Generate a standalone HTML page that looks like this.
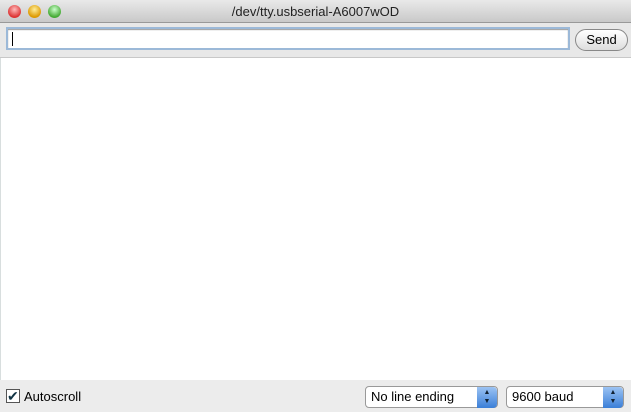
<!DOCTYPE html><html><head><style>
body{margin:0;width:631px;height:412px;overflow:hidden;font-family:"Liberation Sans",sans-serif;background:#ececec;position:relative}
.t{position:absolute;left:0;top:0;width:631px;height:22px;background:linear-gradient(#e9e9e9,#c9c9c9);border-bottom:1px solid #999;text-align:center;font-size:13px;line-height:23px;color:#222}
.d{position:absolute;top:5px;width:13px;height:13px;border-radius:50%}
.tb{position:absolute;top:23px;left:0;width:631px;height:34px;background:#e8e8e8;border-bottom:1px solid #c8c8c8}
.in{position:absolute;left:6px;top:27px;width:560px;height:19px;background:#fff;border:2px solid #9cb9d8;box-shadow:inset 0 1px 1px #999}
.cur{position:absolute;left:4px;top:3px;width:1px;height:14px;background:#000}
.send{position:absolute;left:575px;top:29px;width:51px;height:20px;border:1px solid #888;border-radius:11px;background:linear-gradient(#fff,#ddd);font-size:13px;text-align:center;line-height:20px}
.main{position:absolute;left:0;top:58px;width:631px;height:322px;background:#fff;border-left:1px solid #d8dede}
.sel{position:absolute;top:386px;height:20px;border:1px solid #999;border-radius:4px;background:#fff;font-size:13px;line-height:20px;padding-left:5px;box-sizing:content-box}
.st{position:absolute;right:0;top:0;width:20px;height:20px;background:linear-gradient(#9cc3f3,#3b7fd8);border-radius:0 4px 4px 0;color:#123;font-size:7px;text-align:center;line-height:9px;padding-top:1px}
</style></head><body>
<div class="t">/dev/tty.usbserial-A6007wOD</div>
<div class="d" style="left:8px;background:radial-gradient(circle at 50% 35%,#fbb,#d33 70%)"></div>
<div class="d" style="left:28px;background:radial-gradient(circle at 50% 35%,#fe9,#d90 70%)"></div>
<div class="d" style="left:48px;background:radial-gradient(circle at 50% 35%,#cfc,#4a3 70%)"></div>
<div class="tb"></div>
<div class="in"><div class="cur"></div></div>
<div class="send">Send</div>
<div class="main"></div>
<div style="position:absolute;left:6px;top:389px;width:12px;height:12px;border:1px solid #555;background:#fff;font-size:14px;line-height:12px;color:#134">✔</div>
<div style="position:absolute;left:24px;top:389px;font-size:13px">Autoscroll</div>
<div class="sel" style="left:365px;width:126px">No line ending<div class="st">▲<br>▼</div></div>
<div class="sel" style="left:506px;width:111px">9600 baud<div class="st">▲<br>▼</div></div>
</body></html>
